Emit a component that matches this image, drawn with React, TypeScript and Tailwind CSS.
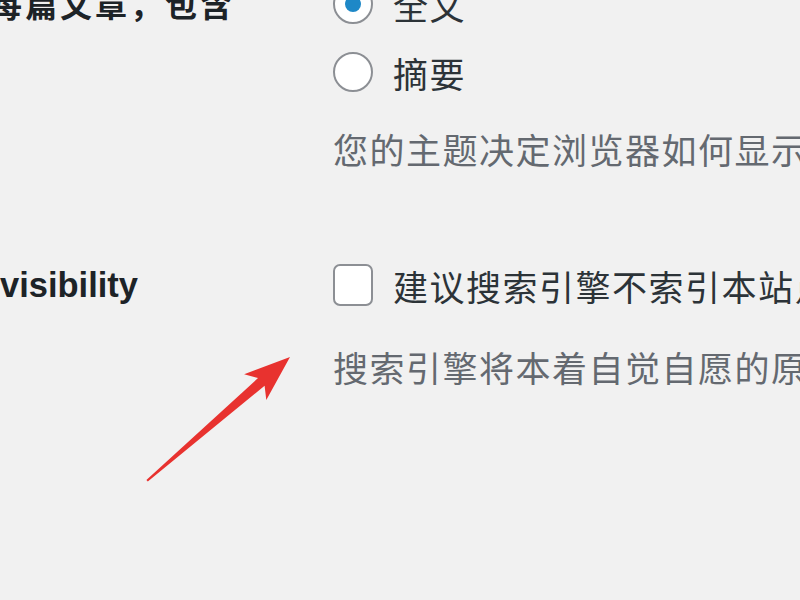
import React from 'react'

const cjk = "font-['Microsoft_YaHei','Noto_Sans_CJK_SC',sans-serif]"

function Radio({ checked }: { checked?: boolean }) {
    return (
        <span className="w-[40px] h-[40px] rounded-full border-2 border-[#8c8f94] bg-white flex items-center justify-center shrink-0">
            {checked && <span className="w-[16px] h-[16px] rounded-full bg-[#1e88c7]" />}
        </span>
    )
}

export default function App() {
    return (
        <div className="w-[800px] h-[600px] bg-[#f1f1f1] overflow-hidden relative">
            <div className="flex flex-col mt-[-17px]">
                {/* row: 每篇文章，包含 */}
                <div className="flex">
                    <div className="w-[333px] shrink-0 h-[42px] flex items-center">
                        <span className={`${cjk} ml-[-10px] mt-[-2px] text-[32px] tracking-[3px] font-bold text-[#1d2327] whitespace-nowrap leading-none`}>
                            每篇文章，包含
                        </span>
                    </div>
                    <div className="flex flex-col">
                        <label className="h-[42px] flex items-center gap-[20px]">
                            <Radio checked />
                            <span className={`${cjk} text-[35px] tracking-[1.5px] text-[#2c3338] leading-none`}>全文</span>
                        </label>
                        <label className="h-[42px] mt-[26px] flex items-center gap-[20px]">
                            <Radio />
                            <span className={`${cjk} text-[35px] tracking-[1.5px] text-[#2c3338] leading-none`}>摘要</span>
                        </label>
                        <p className={`${cjk} h-[42px] mt-[34px] flex items-center text-[35px] tracking-[1.5px] text-[#646970] whitespace-nowrap leading-none`}>
                            您的主题决定浏览器如何显示内容。
                        </p>
                    </div>
                </div>

                {/* row: Search engine visibility */}
                <div className="flex mt-[95px]">
                    <div className="w-[333px] shrink-0 h-[42px] flex items-center">
                        <span className="font-['Liberation_Sans',Arial,sans-serif] text-[34.5px] font-bold text-[#1d2327] leading-none">
                            visibility
                        </span>
                    </div>
                    <div className="flex flex-col">
                        <label className="h-[42px] flex items-center gap-[20px]">
                            <span className="w-[40px] h-[42px] rounded-[7px] border-2 border-[#8c8f94] bg-white shrink-0" />
                            <span className={`${cjk} text-[35px] tracking-[1.5px] text-[#2c3338] whitespace-nowrap leading-none`}>
                                建议搜索引擎不索引本站点
                            </span>
                        </label>
                        <p className={`${cjk} h-[42px] mt-[39px] flex items-center text-[35px] tracking-[1.5px] text-[#646970] whitespace-nowrap leading-none`}>
                            搜索引擎将本着自觉自愿的原则对待WordPress提出的请求。
                        </p>
                    </div>
                </div>
            </div>

            {/* red annotation arrow */}
            <svg className="absolute left-0 top-0" width="800" height="600" viewBox="0 0 800 600">
                <polygon
                    points="290,357 266.3,400 264.6,385.7 147.8,481.6 146.4,480 258,378.1 244.1,374.2"
                    fill="#e8322f"
                />
            </svg>
        </div>
    )
}
